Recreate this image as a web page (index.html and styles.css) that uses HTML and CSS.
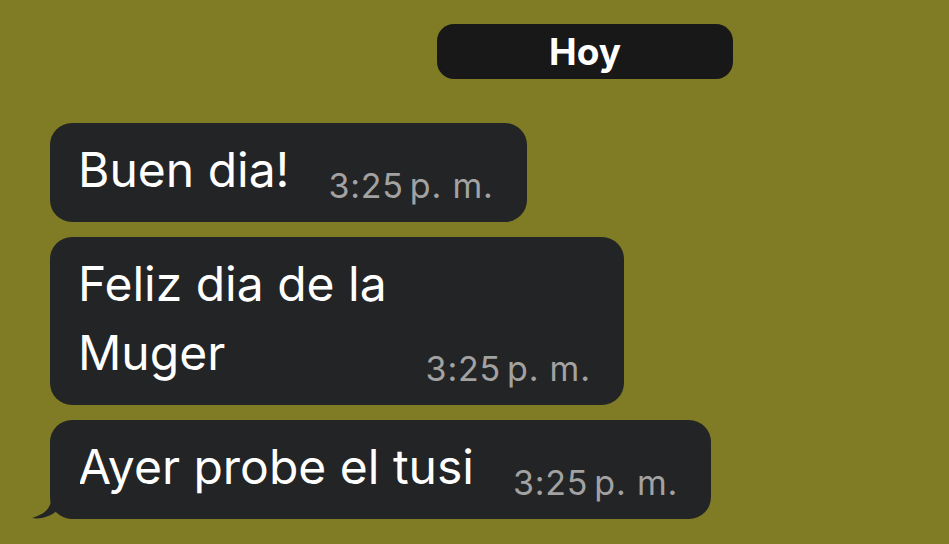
FILE: index.html
```html
<!DOCTYPE html>
<html lang="es">
<head>
<meta charset="utf-8">
<title>Chat</title>
<link rel="stylesheet" href="styles.css">
</head>
<body>
<main class="chat">
  <div class="date-row"><div class="date-pill">Hoy</div></div>
  <div class="bubble">
    <div class="msg">Buen dia!</div>
    <div class="time">3:25<span class="ampm">p. m.</span></div>
  </div>
  <div class="bubble">
    <div class="msg">Feliz dia de la<br>Muger</div>
    <div class="time">3:25<span class="ampm">p. m.</span></div>
  </div>
  <div class="bubble bubble-tail">
    <svg class="tail" width="50" height="80" viewBox="0 0 50 80" aria-hidden="true"><path d="M21 0 L21 60 C21 69 15 75 2 79 C10 80.5 20 78 28 71 C32 77 38 80 46 80 L50 80 L50 0 Z" fill="#232425"/></svg>
    <div class="msg">Ayer probe el tusi</div>
    <div class="time">3:25<span class="ampm">p. m.</span></div>
  </div>
</main>
</body>
</html>
```

FILE: styles.css
```css
html, body {
  margin: 0;
  padding: 0;
}
body {
  background: #807c25;
  font-family: Inter, "Noto Sans", "Liberation Sans", sans-serif;
  width: 949px;
  height: 544px;
  overflow: hidden;
}
.chat {
  display: flex;
  flex-direction: column;
  align-items: flex-start;
  gap: 15px;
  padding: 24px 0 0 50px;
}
.date-row {
  margin-left: 387px;
  margin-bottom: 29px;
}
.date-pill {
  width: 296px;
  height: 55px;
  border-radius: 17px;
  background: #181818;
  color: #ffffff;
  font-weight: 700;
  font-size: 37px;
  line-height: 1;
  display: flex;
  align-items: center;
  justify-content: center;
}
.bubble {
  position: relative;
  display: flex;
  align-items: flex-end;
  gap: 39px;
  background: #232425;
  border-radius: 22px;
  padding: 12px 33px 18px 28px;
}
.msg {
  color: #ffffff;
  font-size: 48px;
  line-height: 69px;
  align-self: flex-start;
}
.time {
  color: #a2a2a2;
  font-size: 34px;
  line-height: 36px;
  letter-spacing: 0.8px;
  white-space: nowrap;
}
.ampm {
  margin-left: 6px;
}
.tail {
  position: absolute;
  left: -20px;
  bottom: 0;
  display: block;
}
```
